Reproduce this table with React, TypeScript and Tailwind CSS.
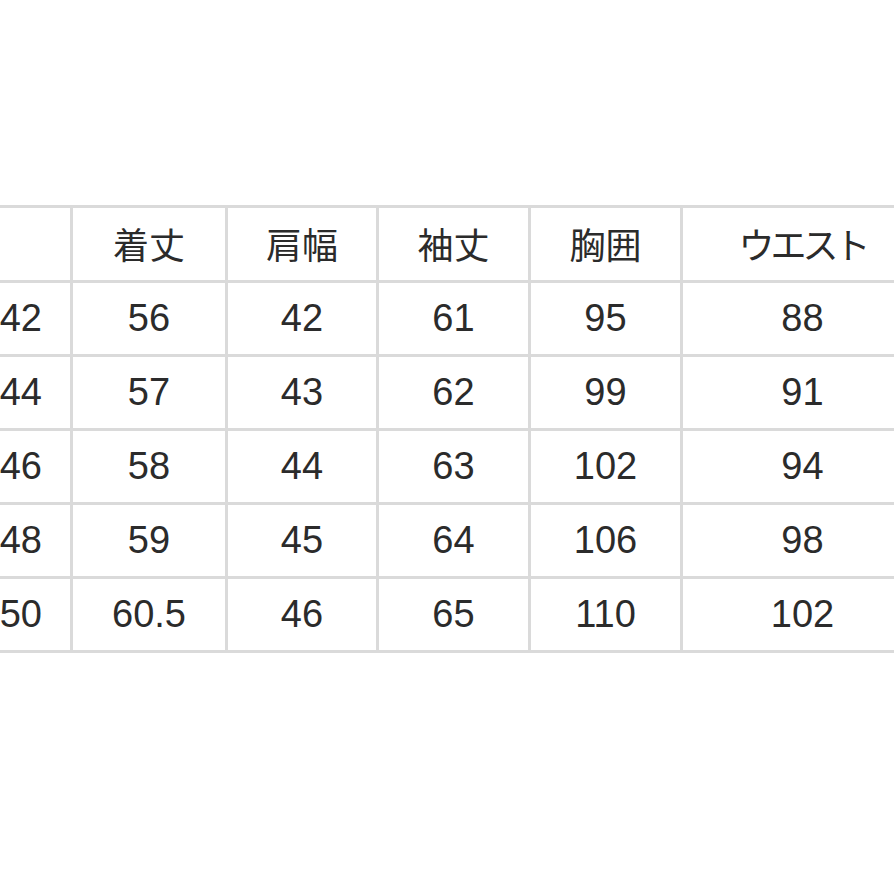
const header = ['', '着丈', '肩幅', '袖丈', '胸囲', 'ウエスト'];

const rows = [
  ['42', '56', '42', '61', '95', '88'],
  ['44', '57', '43', '62', '99', '91'],
  ['46', '58', '44', '63', '102', '94'],
  ['48', '59', '45', '64', '106', '98'],
  ['50', '60.5', '46', '65', '110', '102'],
];

export default function App() {
  return (
    <div className="w-[894px] h-[894px] overflow-hidden bg-white pt-[205px]">
      <div
        className="ml-[-33px] w-max grid grid-cols-[103px_155px_151px_152px_152px_242px] border-t-[3px] border-l-[3px] border-[#dadada] text-[#2b2b2b] text-[38px]"
        style={{ fontFamily: '"Liberation Sans", "Noto Sans CJK JP", sans-serif' }}
      >
        {header.map((h, i) => (
          <div
            key={'h' + i}
            className={
              'h-[75px] flex items-center justify-center border-r-[3px] border-b-[3px] border-[#dadada] pb-[2px] text-[36px] ' +
              (i === 5 ? 'tracking-[-4px]' : '')
            }
            style={{ fontFamily: '"Noto Sans CJK JP", sans-serif' }}
          >
            {h}
          </div>
        ))}
        {rows.map((r, ri) =>
          r.map((c, ci) => (
            <div
              key={ri + '-' + ci}
              className={
                'h-[74px] flex items-center border-r-[3px] border-b-[3px] border-[#dadada] ' +
                (ci === 0 ? 'justify-end pr-[28px]' : 'justify-center')
              }
            >
              {c}
            </div>
          ))
        )}
      </div>
    </div>
  );
}
